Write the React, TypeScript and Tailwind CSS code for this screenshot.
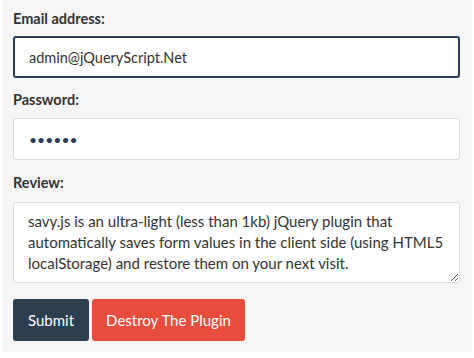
export default function App() {
  return (
    <div className="h-[358px] w-[474px] bg-white px-[2px] pb-[6px]" style={{ fontFamily: 'Lato, "Open Sans", sans-serif' }}>
      <div className="h-full bg-[#f6f6f6] px-[11px] pt-[9px] text-[#333]">
        <form className="flex flex-col">
          <label className="mb-[7px] text-[14.5px] font-bold leading-[20px] text-[#333]">Email address:</label>
          <input
            type="text"
            defaultValue="admin@jQueryScript.Net"
            className="h-[42px] w-[447px] rounded-[3px] border-2 border-[#2c3e50] bg-white px-[14px] text-[14.5px] text-[#333] outline-none"
          />
          <label className="mb-[8px] mt-[12px] text-[14.5px] font-bold leading-[20px]">Password:</label>
          <input
            type="password"
            defaultValue="123456"
            className="h-[42px] w-[447px] rounded-[3px] border border-[#dcdcdc] bg-white px-[15px] text-[14px] text-[#2c3e50] outline-none"
          />
          <label className="mb-[9px] mt-[13px] text-[14.5px] font-bold leading-[20px]">Review:</label>
          <textarea
            defaultValue="savy.js is an ultra-light (less than 1kb) jQuery plugin that automatically saves form values in the client side (using HTML5 localStorage) and restore them on your next visit."
            className="h-[81px] w-[447px] resize-y rounded-[3px] border border-[#dcdcdc] bg-white px-[14px] pt-[8px] text-[15px] leading-[21px] text-[#333] outline-none"
          />
          <div className="mt-[16px] flex gap-[3px]">
            <button type="button" className="h-[42px] w-[76px] rounded-[3px] bg-[#2c3e50] text-[15px] text-white">Submit</button>
            <button type="button" className="h-[42px] w-[153px] rounded-[3px] bg-[#e74c3c] text-[15px] text-white">Destroy The Plugin</button>
          </div>
        </form>
      </div>
    </div>
  )
}
